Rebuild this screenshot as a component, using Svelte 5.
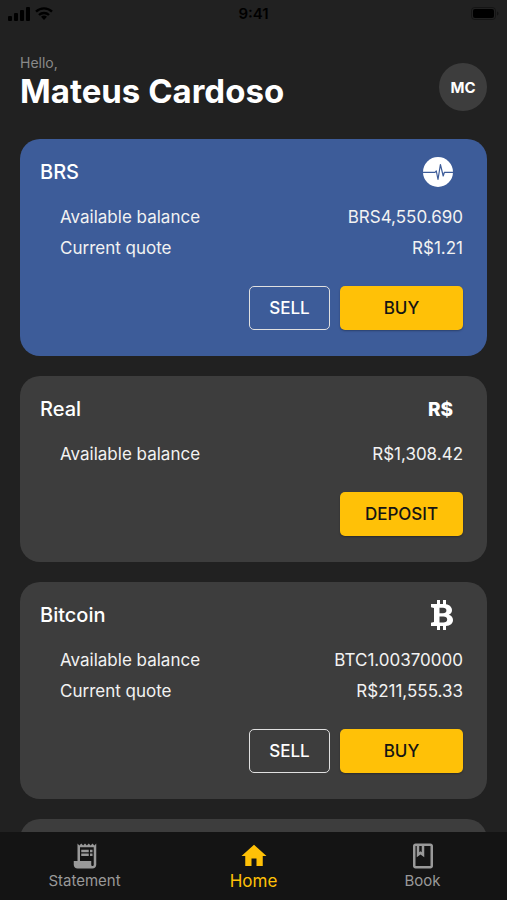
<script lang="ts">
  type Wallet = {
    id: string;
    name: string;
    balance: string;
    quote?: string;
    highlighted?: boolean;
  };

  const user = { name: "Mateus Cardoso", initials: "MC" };

  const wallets: Wallet[] = [
    {
      id: "brs",
      name: "BRS",
      balance: "BRS4,550.690",
      quote: "R$1.21",
      highlighted: true,
    },
    { id: "real", name: "Real", balance: "R$1,308.42" },
    {
      id: "btc",
      name: "Bitcoin",
      balance: "BTC1.00370000",
      quote: "R$211,555.33",
    },
  ];

  const tabs = [
    { id: "statement", label: "Statement" },
    { id: "home", label: "Home" },
    { id: "book", label: "Book" },
  ];

  let activeTab = $state("home");
</script>

<div class="app">
  <div class="status-bar">
    <div class="status-side">
      <svg width="22" height="14" viewBox="0 0 22 14" aria-hidden="true">
        <rect x="0" y="9" width="4" height="5" rx="1" />
        <rect x="6" y="6" width="4" height="8" rx="1" />
        <rect x="12" y="3" width="4" height="11" rx="1" />
        <rect x="18" y="0" width="4" height="14" rx="1" />
      </svg>
      <svg width="18" height="13" viewBox="0 0 18 13" aria-hidden="true">
        <g fill="none" stroke="#000" stroke-width="2.4">
          <path d="M1 4.6a11.5 11.5 0 0 1 16 0" />
          <path d="M4 8a7.2 7.2 0 0 1 10 0" />
        </g>
        <path d="M9 13l-3-3.2a4.4 4.4 0 0 1 6 0z" />
      </svg>
    </div>
    <span class="time">9:41</span>
    <div class="status-side end">
      <svg width="28" height="13" viewBox="0 0 28 13" aria-hidden="true">
        <rect
          x="0.5"
          y="0.5"
          width="24"
          height="12"
          rx="3"
          fill="none"
          stroke="#000"
          stroke-opacity="0.35"
        />
        <rect x="2" y="2" width="21" height="9" rx="2" />
        <path d="M26 4.5v4c1-.4 1.5-1.1 1.5-2s-.5-1.6-1.5-2z" opacity="0.4" />
      </svg>
    </div>
  </div>

  <main>
    <header>
      <div>
        <p class="greeting">Hello,</p>
        <h1>{user.name}</h1>
      </div>
      <button class="avatar">{user.initials}</button>
    </header>

    {#each wallets as wallet (wallet.id)}
      <section class="card" class:highlighted={wallet.highlighted}>
        <div class="card-header">
          <h2>{wallet.name}</h2>
          {#if wallet.id === "brs"}
            <svg width="30" height="30" viewBox="0 0 30 30" aria-hidden="true">
              <circle cx="15" cy="15" r="15" fill="#fff" />
              <path
                d="M0 15.3h12l1.3-1.3 1.7 8.5 2.4-15 2.8 11.5 1.2-3.7H30"
                fill="none"
                stroke="#3d5c99"
                stroke-width="1.2"
                stroke-linejoin="round"
              />
            </svg>
          {:else if wallet.id === "real"}
            <span class="symbol">R$</span>
          {:else}
            <svg width="22" height="30" viewBox="0 0 22 30" aria-hidden="true">
              <path
                fill="#fff"
                fill-rule="evenodd"
                d="M0 4h6V0h3v4h3V0h3v4.2c3.6.7 6 2.8 6 6 0 2.2-1.2 3.8-3.2 4.6 2.7.8 4.2 2.7 4.2 5.2 0 3.5-2.6 5.6-7 6V30h-3v-4H9v4H6v-4H0v-3.2l3-.8V8l-3-.8zM8.5 7.8v5.4H12c2.2 0 3.4-1 3.4-2.7S14.2 7.8 12 7.8zM8.5 16.6v5.8h3.8c2.5 0 3.9-1 3.9-2.9s-1.4-2.9-3.9-2.9z"
              />
            </svg>
          {/if}
        </div>

        <dl>
          <div class="row">
            <dt>Available balance</dt>
            <dd>{wallet.balance}</dd>
          </div>
          {#if wallet.quote}
            <div class="row">
              <dt>Current quote</dt>
              <dd>{wallet.quote}</dd>
            </div>
          {/if}
        </dl>

        <div class="actions">
          {#if wallet.quote}
            <button class="btn outlined">SELL</button>
            <button class="btn primary">BUY</button>
          {:else}
            <button class="btn primary">DEPOSIT</button>
          {/if}
        </div>
      </section>
    {/each}

    <section class="card placeholder"></section>
  </main>

  <nav>
    {#each tabs as tab (tab.id)}
      <a
        href="#{tab.id}"
        class:active={activeTab === tab.id}
        onclick={() => (activeTab = tab.id)}
      >
        <svg width="30" height="30" viewBox="0 0 24 24" aria-hidden="true">
          {#if tab.id === "statement"}
            <path
              d="M19.5 3.5L18 2l-1.5 1.5L15 2l-1.5 1.5L12 2l-1.5 1.5L9 2 7.5 3.5 6 2v14H3v3c0 1.66 1.34 3 3 3h12c1.66 0 3-1.34 3-3V2l-1.5 1.5zM19 19c0 .55-.45 1-1 1s-1-.45-1-1v-3H8V5h11v14z"
            />
            <path d="M9 7h6v2H9zM16 7h2v2h-2zM9 10h6v2H9zM16 10h2v2h-2z" />
          {:else if tab.id === "home"}
            <path d="M10 20v-6h4v6h5v-8h3L12 3 2 12h3v8z" />
          {:else}
            <path
              d="M18 2H6c-1.1 0-2 .9-2 2v16c0 1.1.9 2 2 2h12c1.1 0 2-.9 2-2V4c0-1.1-.9-2-2-2zM9 4h2v5l-1-.75L9 9V4zm9 16H6V4h1v9l3-2.25L13 13V4h5v16z"
            />
          {/if}
        </svg>
        <span>{tab.label}</span>
      </a>
    {/each}
  </nav>
</div>

<style>
  :global(body) {
    background: #212121;
  }

  .app {
    display: flex;
    flex-direction: column;
    height: 100vh;
    background: #212121;
    color: #fff;
    font-family: Inter, "Liberation Sans", sans-serif;
  }

  .status-bar {
    display: flex;
    align-items: center;
    flex-shrink: 0;
    height: 27px;
    padding: 0 8px;
  }

  .status-side {
    display: flex;
    align-items: center;
    gap: 5px;
    flex: 1;
  }

  .status-side.end {
    justify-content: flex-end;
  }

  .time {
    color: #000;
    font-size: 15px;
    font-weight: 600;
  }

  main {
    display: flex;
    flex-direction: column;
    gap: 20px;
    flex: 1;
    min-height: 0;
    padding: 28px 20px 20px;
    overflow-y: auto;
    scrollbar-width: none;
  }

  header {
    display: flex;
    align-items: flex-end;
    justify-content: space-between;
    margin-bottom: 8px;
  }

  .greeting {
    margin: 0;
    color: #8a8a8a;
    font-size: 14px;
    line-height: 16px;
  }

  h1 {
    margin: 0;
    font-size: 33px;
    font-weight: 700;
    line-height: 40px;
  }

  .avatar {
    width: 48px;
    height: 48px;
    padding: 0;
    border: none;
    border-radius: 50%;
    background: #3d3d3d;
    color: #fff;
    font-family: inherit;
    font-size: 15px;
    font-weight: 700;
  }

  .card {
    flex-shrink: 0;
    padding: 18px 24px 26px 20px;
    border-radius: 20px;
    background: #3d3d3d;
  }

  .card.highlighted {
    background: #3d5c99;
  }

  .placeholder {
    min-height: 140px;
  }

  .card-header {
    display: flex;
    align-items: center;
    justify-content: space-between;
    height: 30px;
    padding-right: 10px;
  }

  h2 {
    margin: 0;
    font-size: 20px;
    font-weight: 500;
    line-height: 24px;
  }

  .symbol {
    font-size: 19px;
    font-weight: 800;
  }

  dl {
    margin: 15px 0 22px;
    padding-left: 20px;
  }

  .row {
    display: flex;
    justify-content: space-between;
    color: #f2f2f2;
    font-size: 17px;
    line-height: 31px;
  }

  dd {
    margin: 0;
  }

  .actions {
    display: flex;
    justify-content: flex-end;
    gap: 10px;
  }

  .btn {
    height: 44px;
    border-radius: 5px;
    font-family: inherit;
    font-size: 17px;
    font-weight: 500;
    cursor: pointer;
  }

  .outlined {
    min-width: 81px;
    padding: 0 16px;
    border: 1px solid #e0e0e0;
    background: transparent;
    color: #fff;
  }

  .primary {
    min-width: 123px;
    padding: 0 20px;
    border: none;
    background: #ffc107;
    color: #141414;
    box-shadow: 0 1px 2px rgba(0, 0, 0, 0.3);
  }

  nav {
    display: flex;
    flex-shrink: 0;
    height: 68px;
    background: #141414;
  }

  nav a {
    display: flex;
    flex: 1;
    flex-direction: column;
    align-items: center;
    padding-top: 9px;
    color: #999;
    font-size: 15px;
    line-height: 20px;
    text-decoration: none;
  }

  nav svg {
    fill: currentColor;
  }

  nav a.active {
    color: #ffc107;
    font-size: 17px;
  }
</style>
